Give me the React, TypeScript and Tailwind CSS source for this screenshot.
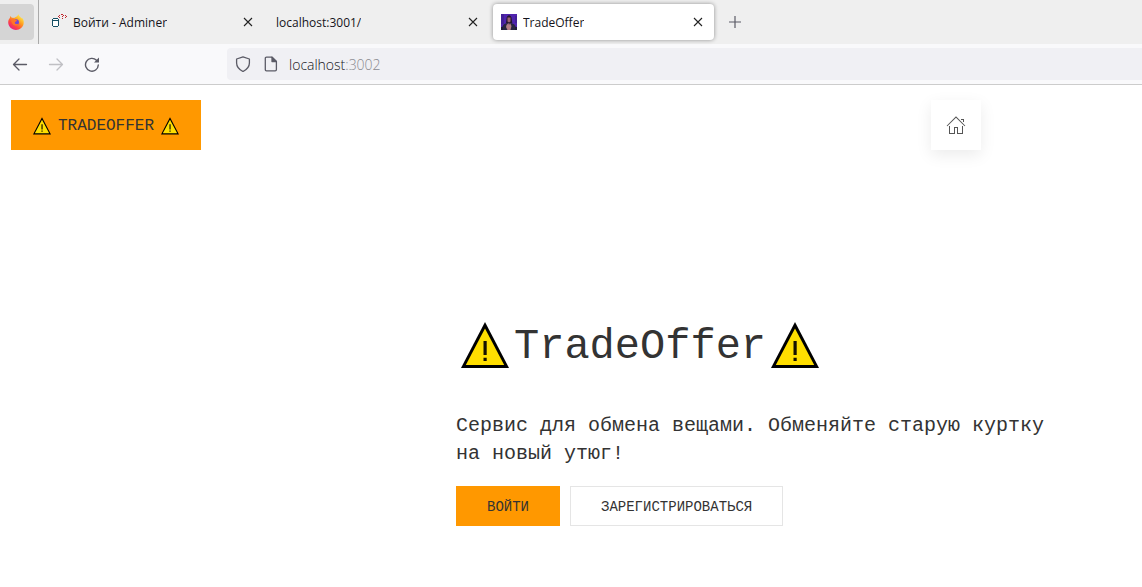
import React from "react";

function Warning({ className }: { className: string }) {
  return (
    <svg viewBox="0 0 48 47" className={className} aria-label="Внимание" role="img">
      <path d="M24 0 48 46H0Z" fill="#000" />
      <path d="M24 6.500 43.200 43H4.800Z" fill="#ffde00" />
      <path d="M22.500 19h3.200v14h-3.200zM22.500 35.800h3.200v3.200h-3.200z" fill="#151000" />
    </svg>
  );
}

function Firefox() {
  return (
    <svg viewBox="0 0 16 16" className="size-4" aria-hidden="true">
      <defs>
        <linearGradient id="flame" x1="0.85" y1="0.1" x2="0.2" y2="0.95">
          <stop offset="0" stopColor="#fff04a" />
          <stop offset="0.4" stopColor="#ff9a1f" />
          <stop offset="0.7" stopColor="#ff4a3c" />
          <stop offset="1" stopColor="#e91a8c" />
        </linearGradient>
      </defs>
      <path
        d="M10.300 0c.3 1.500 1 2 2 3 .6.6 1 1.200 1.200 1.600.3-.3.3-.6.2-1C15.300 5 16 7 15.700 9.200c-.5 3.900-3.700 6.700-7.700 6.700-4.400 0-7.700-3.200-7.800-7.300C.1 6.500 1 4.800 2 3.700L2.300 2l1.500 1.700c.8-.1 1.600 0 2.200.2C7.700 2.800 9.900 2.400 10.300 0Z"
        fill="url(#flame)"
      />
      <circle cx="8" cy="8.300" r="3" fill="#7446d8" />
      <path d="M3.600 5.300c1.500-.8 3-.5 4 .5.6.5 1.400.6 1.700.8-.3.8-1.300.9-2 1.300-.8.5-.5 1.700.6 2.100 1.100.3 2-.1 2.800-.5-.6 1.500-2 2.300-3.600 2.100C4.700 11.300 3 8.700 3.600 5.300Z" fill="#ff7528" />
    </svg>
  );
}

function AdminerIcon() {
  return (
    <svg viewBox="0 0 16 16" className="size-4 shrink-0" aria-hidden="true" fill="none" shapeRendering="crispEdges">
      <path d="M2 4h5v1H2zM1 5h1v7H1zM7 5h1v7H7zM2 6h5v1H2zM2 12h5v1H2z" fill="#154f63" />
      <path d="M2 5h5v1H2zM2 7h5v5H2z" fill="#fff" />
      <path d="M8 1h1v1H8zM7 2h1v1H7zM8 3h1v1H8zM10 0h2v1h-2zM12 1h1v1h-1zM11 2h1v1h-1zM11 4h1v1h-1zM14 1h1v1h-1zM15 2h1v1h-1zM14 3h1v1h-1z" fill="#c2272d" />
    </svg>
  );
}

function PortraitIcon() {
  return (
    <svg viewBox="0 0 16 16" className="size-4 shrink-0" aria-hidden="true">
      <path d="M0 0h16v16H0z" fill="#5024ae" />
      <path d="M0 0h3v10H0zM14 2h2v7h-2z" fill="#432096" />
      <path d="M5.500 5c0-5 5-5 5.200 0l.6 4H5z" fill="#24172f" />
      <path d="M1 16c0-4 1-6 5-7h4c4 1 5 3 5 7z" fill="#292541" />
      <path d="M6.500 3.500h3v4l-1.500 1-1.500-1z" fill="#9c6471" />
      <path d="m5.500 11 2-2 .5 2 1-2 1.500 3-1 4h-3l-1.500-3z" fill="#b47e85" />
      <path d="M0 13h2v3H0zM14 13h2v3h-2z" fill="#211a38" />
    </svg>
  );
}

function Close() {
  return (
    <svg viewBox="0 0 10 10" className="size-[10px]" fill="none" stroke="#222" strokeWidth="1.100" aria-hidden="true">
      <path d="m1 1 8 8M9 1 1 9" />
    </svg>
  );
}

function Tab({ title, icon, active = false }: { title: string; icon?: React.ReactNode; active?: boolean }) {
  return (
    <div
      className={
        active
          ? "flex h-9 w-[221px] items-center rounded bg-white pr-[11px] pl-2 shadow-[0_0_4px_rgba(0,0,0,0.4)]"
          : "flex h-9 w-[221px] items-center pr-[11px] pl-2"
      }
    >
      <button type="button" className="flex min-w-0 flex-1 items-center gap-[6px] text-left text-xs text-[#15141a]">
        {icon}
        <span className="truncate pt-0.5">{title}</span>
      </button>
      <button type="button" aria-label={"Закрыть " + title}>
        <Close />
      </button>
    </div>
  );
}

function Browser() {
  return (
    <header className="font-['Open_Sans',sans-serif]">
      <div className="flex h-11 items-center bg-[#efefef]">
        <button type="button" aria-label="Firefox" className="flex h-9 w-[34px] items-center justify-center rounded-r bg-[#d5d5d5] pr-[3px]">
          <Firefox />
        </button>
        <div className="ml-1 h-full w-px bg-[#aaa]" />
        <div className="ml-1 flex gap-1">
          <Tab title="Войти - Adminer" icon={<AdminerIcon />} />
          <Tab title="localhost:3001/" />
          <Tab title="TradeOffer" icon={<PortraitIcon />} active />
        </div>
        <button type="button" aria-label="Новая вкладка" className="ml-[15px]">
          <svg viewBox="0 0 12 12" className="size-3" stroke="#5b5b66" strokeWidth="1.200">
            <path d="M6 0v12M0 6h12" />
          </svg>
        </button>
      </div>
      <div className="flex h-[41px] items-center border-b border-[#ccc] bg-[#f9f9fb]">
        <div className="flex w-[227px] shrink-0 items-center gap-5 pl-3">
          <button type="button" aria-label="Назад">
            <svg viewBox="0 0 16 16" className="size-4" fill="none" stroke="#5b5b66" strokeWidth="1.300" strokeLinecap="round" strokeLinejoin="round">
              <path d="M14.500 8.500H1.500M7 3 1.500 8.500 7 14" />
            </svg>
          </button>
          <button type="button" aria-label="Вперёд" disabled>
            <svg viewBox="0 0 16 16" className="size-4" fill="none" stroke="#c0c0c4" strokeWidth="1.300" strokeLinecap="round" strokeLinejoin="round">
              <path d="M1.500 8.500h13M9 3 14.500 8.500 9 14" />
            </svg>
          </button>
          <button type="button" aria-label="Обновить">
            <svg viewBox="0 0 16 16" className="size-4" fill="none" stroke="#5b5b66" strokeWidth="1.400" strokeLinecap="round">
              <path d="M14.300 9A6.400 6.400 0 1 1 12.500 4.300" />
              <path d="M15 1.500v5h-5z" fill="#5b5b66" stroke="none" />
            </svg>
          </button>
        </div>
        <div className="flex h-8 flex-1 items-center rounded-l bg-[#f0f0f4] pl-2">
          <svg viewBox="0 0 16 16" className="size-4" fill="none" stroke="#5b5b66" strokeWidth="1.300" strokeLinejoin="round" aria-hidden="true">
            <path d="M8 .8 14.400 3v4c0 3.800-2.400 6.500-6.400 8.500C4 13.500 1.600 10.800 1.600 7V3z" />
          </svg>
          <svg viewBox="0 0 16 16" className="ml-3 size-4" fill="none" stroke="#5b5b66" strokeWidth="1.300" strokeLinejoin="round" aria-hidden="true">
            <path d="M3.500 1.200H9L13.400 5.500v8.100q0 1.200-1.200 1.200H3.500q-1.200 0-1.200-1.200V2.400q0-1.200 1.200-1.200Z" />
            <path d="M9 1.200V5.500h4.400z" fill="#5b5b66" />
          </svg>
          <a href="#" className="ml-[10px] pt-0.5 text-sm font-light text-[#15141a]">
            localhost<span className="text-[#8a8a90]">:3002</span>
          </a>
        </div>
      </div>
    </header>
  );
}

export default function App() {
  return (
    <div className="min-h-screen bg-white text-[#333]">
      <Browser />
      <div className="font-['Liberation_Mono',monospace]">
        <nav className="flex items-center justify-between pt-[15px] pr-[161px] pl-[11px]">
          <a href="#" className="flex h-[50px] w-[190px] items-center justify-center gap-[7px] bg-[#ff9800] pt-0.5 text-base">
            <Warning className="h-[18px] w-[18px]" />
            TRADEOFFER
            <Warning className="h-[18px] w-[18px]" />
          </a>
          <a href="#" aria-label="Главная" className="flex size-[50px] items-center justify-center bg-white shadow-[0_5px_15px_rgba(0,0,0,0.08)]">
            <svg viewBox="0 0 20 20" className="size-5" fill="#555" aria-hidden="true">
              <path d="M18.650 11.350 10 2.710 1.350 11.350.65 10.650 10 1.290l9.350 9.360z" />
              <path d="M15 4h3v3h-1V5h-2zM3 11h1v7h4v-6h4v6h4v-7h1v8h-6v-6H9v6H3z" />
            </svg>
          </a>
        </nav>
        <main className="pt-[172px] pr-[86px] pl-[456px]">
          <h1 className="flex items-start text-[42px] leading-[50px]">
            <Warning className="mr-[5px] ml-[5px] h-[47px] w-12" />
            TradeOffer
            <Warning className="ml-[5px] h-[47px] w-12" />
          </h1>
          <p className="mt-10 max-w-[600px] text-xl leading-7">
            Сервис для обмена вещами. Обменяйте старую куртку на новый утюг!
          </p>
          <div className="mt-[18px] flex gap-[10px] text-sm">
            <button type="button" className="h-10 border border-[#ff9800] bg-[#ff9800] px-[30px] pt-0.5">
              ВОЙТИ
            </button>
            <button type="button" className="h-10 border border-[#e5e5e5] px-[30px] pt-0.5">
              ЗАРЕГИСТРИРОВАТЬСЯ
            </button>
          </div>
        </main>
      </div>
    </div>
  );
}
